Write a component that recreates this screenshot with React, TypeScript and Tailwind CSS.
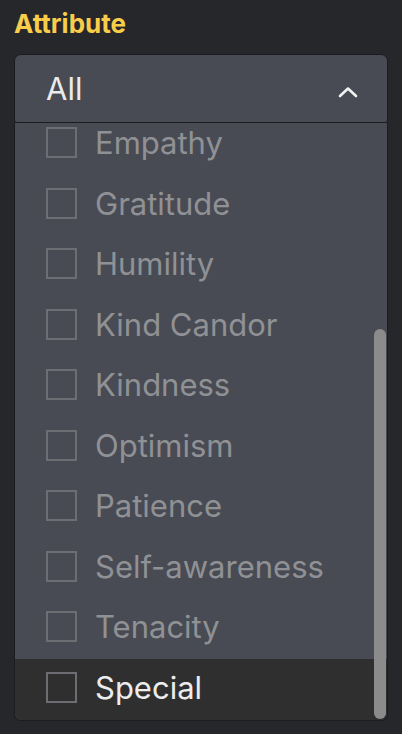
import React from "react";

const items = [
  "Empathy",
  "Gratitude",
  "Humility",
  "Kind Candor",
  "Kindness",
  "Optimism",
  "Patience",
  "Self-awareness",
  "Tenacity",
  "Special",
];

export default function App() {
  return (
    <div className="h-[734px] w-full overflow-hidden bg-[#26272b] px-[14px] pt-[7px] font-['Inter',sans-serif]">
      <div className="text-[26px] font-bold leading-[34px] text-[#f7cd4a]">Attribute</div>
      <div className="mt-[13px] flex flex-col">
        <button className="flex h-[69px] w-full items-center justify-between rounded-t-[7px] rounded-b-[3px] border border-[#1b1c1f] bg-[#484b53] pl-[31px] pr-[29px] text-left">
          <span className="text-[31px] leading-none text-[#ebebeb]">All</span>
          <svg width="20" height="12" viewBox="0 0 20 12" className="mt-[6px]">
            <path d="M2 10 L10 2.5 L18 10" fill="none" stroke="#f2f2f2" strokeWidth="2.6" strokeLinecap="round" strokeLinejoin="round" />
          </svg>
        </button>
        <div className="relative h-[598px] overflow-hidden rounded-b-[7px] border border-t-0 border-[#1b1c1f] bg-[#484b53]">
          <div className="mt-[-8.5px] flex flex-col">
            {items.map((it) => {
              const special = it === "Special";
              return (
                <div
                  key={it}
                  className={`flex h-[60.5px] shrink-0 items-center gap-[18px] pl-[31px] ${special ? "bg-[#2f2f30]" : ""}`}
                >
                  <span className="mb-[4px] h-[31px] w-[31px] shrink-0 border-2 border-[#6c6e73]" />
                  <span className={`mb-[4px] text-[31px] leading-none ${special ? "text-[#ececec]" : "text-[#909195]"}`}>{it}</span>
                </div>
              );
            })}
          </div>
          <div className="absolute right-[1px] top-[206px] bottom-[1px] w-[12px] rounded-full bg-[#8b8b8b]" />
        </div>
      </div>
    </div>
  );
}
